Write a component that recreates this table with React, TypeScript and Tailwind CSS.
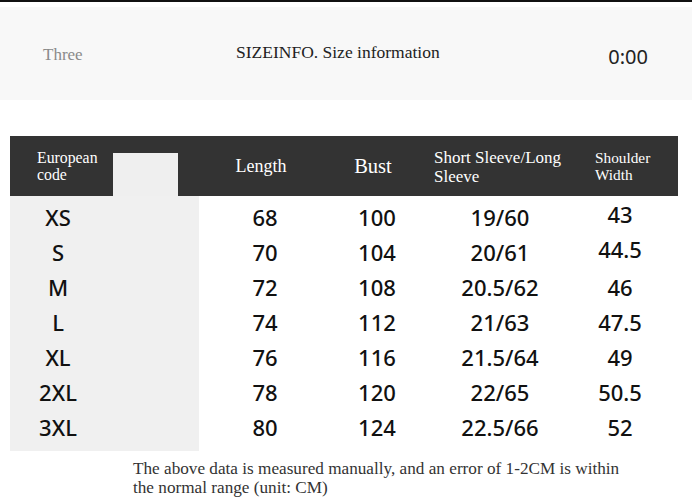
const rows = [
  ['XS', '68', '100', '19/60', '43'],
  ['S', '70', '104', '20/61', '44.5'],
  ['M', '72', '108', '20.5/62', '46'],
  ['L', '74', '112', '21/63', '47.5'],
  ['XL', '76', '116', '21.5/64', '49'],
  ['2XL', '78', '120', '22/65', '50.5'],
  ['3XL', '80', '124', '22.5/66', '52'],
]

const serif = "font-['Liberation_Serif','DejaVu_Serif',serif]"
const sans = "font-['Noto_Sans','Open_Sans',sans-serif]"

export default function App() {
  return (
    <div className="w-[692px] h-[499px] bg-white overflow-hidden">
      <div className="h-[2px] bg-[#111]" />
      <div className="mt-[5px] h-[93px] bg-[#f8f8f8] flex items-center">
        <div className={`${serif} w-[236px] pl-[43px] text-[17px] text-[#8a8a8a] pt-[3px]`}>Three</div>
        <div className={`${serif} flex-1 text-[17.5px] text-[#222] -mt-[2px]`}>SIZEINFO. Size information</div>
        <div className={`${sans} pr-[44px] text-[20px] text-[#222] pt-[6px]`}>0:00</div>
      </div>

      <div className="mt-[36px] mx-[10px] w-[668px]">
        <div className={`${serif} relative h-[60px] bg-[#333333] text-white flex items-center`}>
          <div className="absolute left-[103px] top-[17px] w-[65px] h-[43px] bg-[#efefef]" />
          <div className="w-[189px] pl-[27px] text-[15.8px] leading-[17px]">
            European<br />code
          </div>
          <div className="w-[132px] text-center text-[18px] -ml-[4px]">Length</div>
          <div className="w-[92px] text-center text-[20.5px]">Bust</div>
          <div className="w-[162px] pl-[15px] text-[17px] leading-[19px] pt-[2px]">
            Short Sleeve/Long<br />Sleeve
          </div>
          <div className="text-[15.3px] leading-[17px] pl-[14px]">
            Shoulder<br />Width
          </div>
        </div>

        <div className={`${sans} flex text-[22px] font-medium text-[#111]`}>
          <div className="w-[189px] bg-[#f0f0f0] pt-[4px] pb-[6px]">
            {rows.map((r) => (
              <div key={r[0]} className="h-[35px] w-[96px] flex items-center justify-center">{r[0]}</div>
            ))}
          </div>
          <div className="pt-[4px] flex-1">
            {rows.map((r, i) => (
              <div key={r[0]} className="h-[35px] flex items-center">
                <div className="w-[132px] text-center">{r[1]}</div>
                <div className="w-[92px] text-center">{r[2]}</div>
                <div className="w-[154px] text-center">{r[3]}</div>
                <div className={i < 2 ? 'w-[86px] text-center -mt-[6px]' : 'w-[86px] text-center'}>{r[4]}</div>
              </div>
            ))}
          </div>
        </div>
      </div>

      <p className={`${serif} mt-[8px] ml-[133px] w-[492px] text-[17.2px] leading-[19px] text-[#333]`}>
        The above data is measured manually, and an error of 1-2CM is within the normal range (unit: CM)
      </p>
    </div>
  )
}
